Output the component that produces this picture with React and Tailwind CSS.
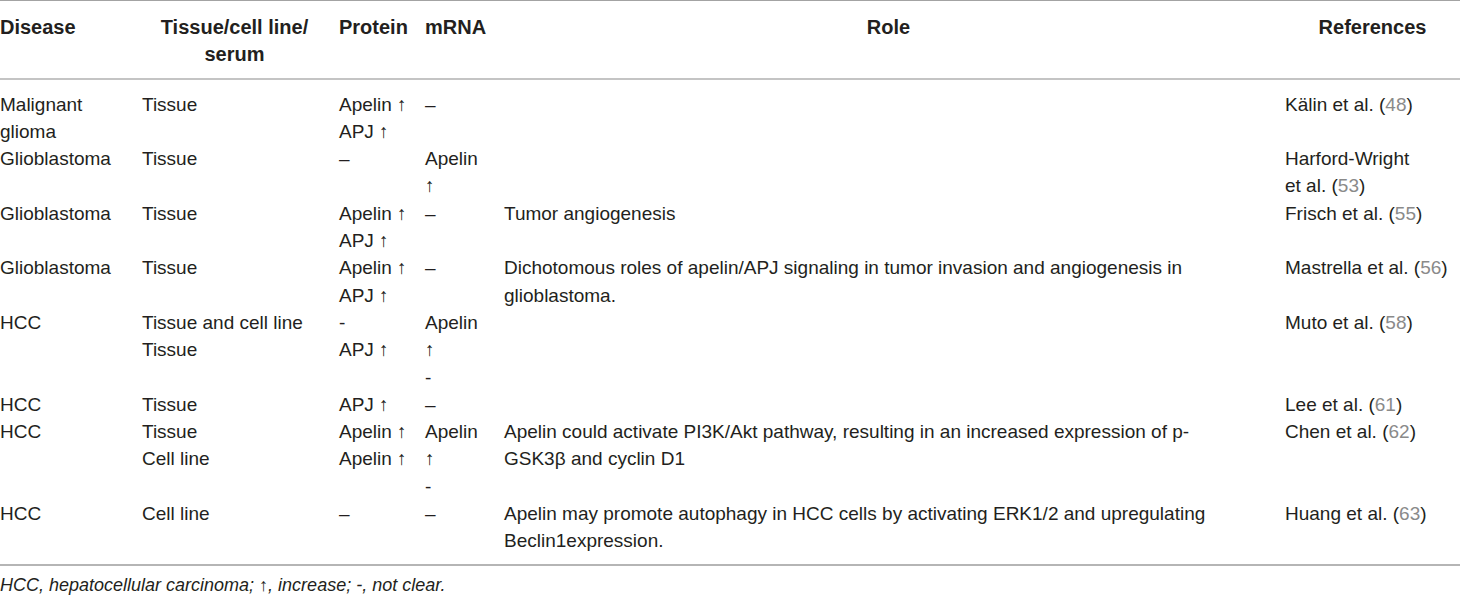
import React from 'react';

const cols = 'grid grid-cols-[142px_197px_86px_79px_781px_175px]';

const Ref = ({ name, n }) => (
  <>
    {name} et&nbsp;al. (<span className="text-[#8a8a8a]">{n}</span>)
  </>
);

const rows = [
  {
    disease: 'Malignant glioma',
    tissue: ['Tissue'],
    protein: ['Apelin ↑', 'APJ ↑'],
    mrna: ['–'],
    role: '',
    ref: <Ref name="Kälin" n="48" />,
  },
  {
    disease: 'Glioblastoma',
    tissue: ['Tissue'],
    protein: ['–'],
    mrna: ['Apelin ↑'],
    role: '',
    ref: <Ref name="Harford-Wright" n="53" />,
  },
  {
    disease: 'Glioblastoma',
    tissue: ['Tissue'],
    protein: ['Apelin ↑', 'APJ ↑'],
    mrna: ['–'],
    role: 'Tumor angiogenesis',
    ref: <Ref name="Frisch" n="55" />,
  },
  {
    disease: 'Glioblastoma',
    tissue: ['Tissue'],
    protein: ['Apelin ↑', 'APJ ↑'],
    mrna: ['–'],
    role: 'Dichotomous roles of apelin/APJ signaling in tumor invasion and angiogenesis in glioblastoma.',
    ref: <Ref name="Mastrella" n="56" />,
  },
  {
    disease: 'HCC',
    tissue: ['Tissue and cell line', 'Tissue'],
    protein: ['-', 'APJ ↑'],
    mrna: ['Apelin ↑', '-'],
    role: '',
    ref: <Ref name="Muto" n="58" />,
  },
  {
    disease: 'HCC',
    tissue: ['Tissue'],
    protein: ['APJ ↑'],
    mrna: ['–'],
    role: '',
    ref: <Ref name="Lee" n="61" />,
  },
  {
    disease: 'HCC',
    tissue: ['Tissue', 'Cell line'],
    protein: ['Apelin ↑', 'Apelin ↑'],
    mrna: ['Apelin ↑', '-'],
    role: 'Apelin could activate PI3K/Akt pathway, resulting in an increased expression of p-GSK3β and cyclin D1',
    ref: <Ref name="Chen" n="62" />,
  },
  {
    disease: 'HCC',
    tissue: ['Cell line'],
    protein: ['–'],
    mrna: ['–'],
    role: 'Apelin may promote autophagy in HCC cells by activating ERK1/2 and upregulating Beclin1expression.',
    ref: <Ref name="Huang" n="63" />,
  },
];

const Lines = ({ items }) => items.map((t, i) => <div key={i}>{t}</div>);

export default function App() {
  return (
    <div
      className="w-[1460px] h-[598px] bg-white text-[#231f20] overflow-hidden"
      style={{ fontFamily: '"Liberation Sans", Arial, sans-serif' }}
    >
      <div className="border-t border-[#a3a3a3]">
        <div className={`${cols} text-[20px] leading-[27.3px] font-bold pt-[13px] pb-[9px] border-b-2 border-[#c4c4c4]`}>
          <div className="pr-3">Disease</div>
          <div className="pr-3 text-center">Tissue/cell line/ serum</div>
          <div>Protein</div>
          <div>mRNA</div>
          <div className="pr-3 text-center">Role</div>
          <div className="text-center">References</div>
        </div>
        <div className="text-[19px] leading-[27.3px] pt-[11px] pb-[9px] border-b-2 border-[#b5b5b5]">
          {rows.map((r, i) => (
            <div key={i} className={cols}>
              <div className="pr-3">{r.disease}</div>
              <div className="pr-3">
                <Lines items={r.tissue} />
              </div>
              <div className="pr-1">
                <Lines items={r.protein} />
              </div>
              <div className="pr-[17px]">
                <Lines items={r.mrna} />
              </div>
              <div className="pr-[40px]">{r.role}</div>
              <div className="pr-[10px]">{r.ref}</div>
            </div>
          ))}
        </div>
        <div className="text-[18px] italic leading-[26px] pt-[6px]">
          HCC, hepatocellular carcinoma; ↑, increase; -, not clear.
        </div>
      </div>
    </div>
  );
}
